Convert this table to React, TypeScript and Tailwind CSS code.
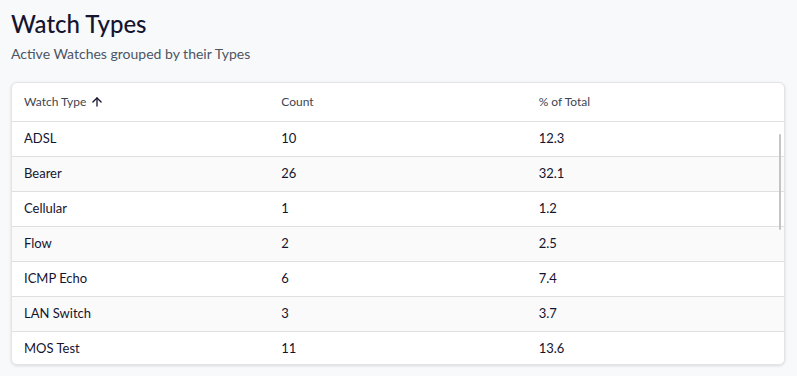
import { ArrowUp } from "lucide-react"

const rows = [
  { type: "ADSL", count: 10, pct: "12.3" },
  { type: "Bearer", count: 26, pct: "32.1" },
  { type: "Cellular", count: 1, pct: "1.2" },
  { type: "Flow", count: 2, pct: "2.5" },
  { type: "ICMP Echo", count: 6, pct: "7.4" },
  { type: "LAN Switch", count: 3, pct: "3.7" },
  { type: "MOS Test", count: 11, pct: "13.6" },
]

export default function App() {
  return (
    <div
      className="w-[797px] h-[376px] bg-[#f8f9fb] px-[11px] pt-[8px] overflow-hidden"
      style={{ fontFamily: "Lato, 'Open Sans', sans-serif" }}
    >
      <h1 className="text-[24px] leading-[32px] font-medium text-[#15142f]">Watch Types</h1>
      <p className="mt-[5px] text-[14px] leading-[18px] text-[#4b5563]">Active Watches grouped by their Types</p>

      <div className="relative mt-[19px] mr-[1px] rounded-[6px] border border-[#e4e4e7] bg-white shadow-[0_1px_3px_rgba(0,0,0,0.12)] overflow-hidden">
        <div className="grid grid-cols-3 h-[39px] items-center border-b border-[#e0e0e0] text-[12px] text-[#3f4451]">
          <div className="pl-[12px] flex items-center gap-[4px]">
            Watch Type
            <ArrowUp className="w-[14px] h-[14px] text-[#15142f]" strokeWidth={2.25} />
          </div>
          <div className="pl-[12px]">Count</div>
          <div className="pl-[12px]">% of Total</div>
        </div>
        <div className="h-[242px] overflow-hidden">
          {rows.map((r, i) => (
            <div
              key={r.type}
              className={`grid grid-cols-3 h-[35px] items-center border-b border-[#e0e0e0] text-[13px] text-[#15142f] ${
                i % 2 === 1 ? "bg-[#fafafa]" : "bg-white"
              }`}
            >
              <div className="pl-[12px]">{r.type}</div>
              <div className="pl-[12px]">{r.count}</div>
              <div className="pl-[12px]">{r.pct}</div>
            </div>
          ))}
        </div>
        <div className="absolute right-[3px] top-[51px] w-[2px] h-[96px] rounded-full bg-[#c4c4c4]" />
      </div>
    </div>
  )
}
